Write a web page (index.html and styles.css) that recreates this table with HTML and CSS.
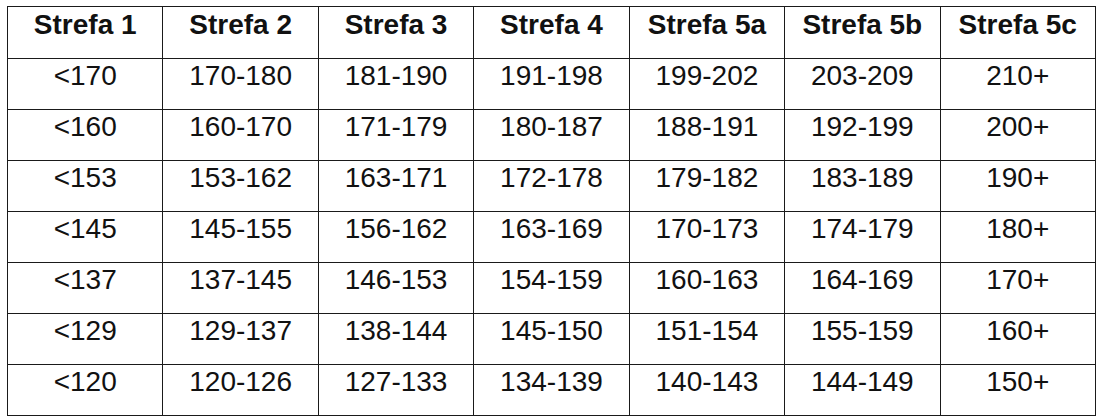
FILE: index.html
```html
<!DOCTYPE html>
<html lang="pl">
<head>
<meta charset="utf-8">
<title>Strefy tętna</title>
<link rel="stylesheet" href="styles.css">
</head>
<body>
<table class="zones">
  <thead>
    <tr><th>Strefa 1</th><th>Strefa 2</th><th>Strefa 3</th><th>Strefa 4</th><th>Strefa 5a</th><th>Strefa 5b</th><th>Strefa 5c</th></tr>
  </thead>
  <tbody>
    <tr><td>&lt;170</td><td>170-180</td><td>181-190</td><td>191-198</td><td>199-202</td><td>203-209</td><td>210+</td></tr>
    <tr><td>&lt;160</td><td>160-170</td><td>171-179</td><td>180-187</td><td>188-191</td><td>192-199</td><td>200+</td></tr>
    <tr><td>&lt;153</td><td>153-162</td><td>163-171</td><td>172-178</td><td>179-182</td><td>183-189</td><td>190+</td></tr>
    <tr><td>&lt;145</td><td>145-155</td><td>156-162</td><td>163-169</td><td>170-173</td><td>174-179</td><td>180+</td></tr>
    <tr><td>&lt;137</td><td>137-145</td><td>146-153</td><td>154-159</td><td>160-163</td><td>164-169</td><td>170+</td></tr>
    <tr><td>&lt;129</td><td>129-137</td><td>138-144</td><td>145-150</td><td>151-154</td><td>155-159</td><td>160+</td></tr>
    <tr><td>&lt;120</td><td>120-126</td><td>127-133</td><td>134-139</td><td>140-143</td><td>144-149</td><td>150+</td></tr>
  </tbody>
</table>
</body>
</html>
```

FILE: styles.css
```css
html, body {
  margin: 0;
  background: #ffffff;
}
body {
  padding: 6px 0 0 7px;
  font-family: "Liberation Sans", Arial, sans-serif;
  color: #111111;
}
.zones {
  border-collapse: separate;
  border-spacing: 0;
  table-layout: fixed;
  width: 1089px;
  border-top: 1px solid #1a1a1a;
  border-left: 1px solid #1a1a1a;
}
.zones th,
.zones td {
  border-right: 1px solid #1a1a1a;
  border-bottom: 1px solid #1a1a1a;
  font-size: 28px;
  line-height: 32px;
  text-align: center;
  vertical-align: top;
  white-space: nowrap;
  padding: 1px 0 17px 0;
}
.zones th {
  font-weight: bold;
  padding: 2px 0 17px 0;
}
```
